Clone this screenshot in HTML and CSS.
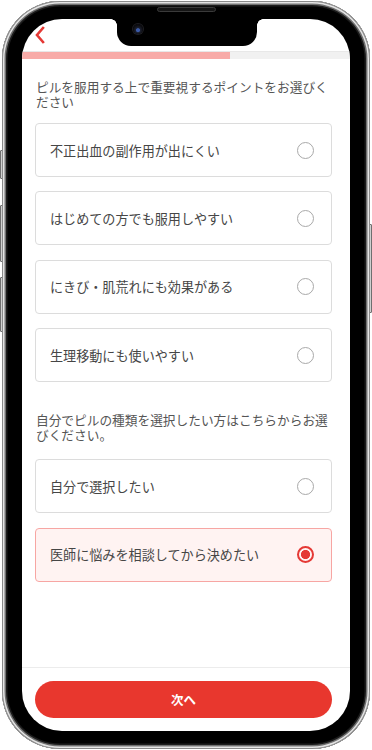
FILE: index.html
```html
<!DOCTYPE html>
<html lang="ja">
<head>
<meta charset="utf-8">
<title>ピル選択</title>
<link rel="stylesheet" href="styles.css">
</head>
<body>
<div class="device">
  <span class="side-btn btn-mute"></span>
  <span class="side-btn btn-vol-up"></span>
  <span class="side-btn btn-vol-down"></span>
  <span class="side-btn btn-power"></span>
  <div class="phone">
    <span class="speaker"></span>
    <div class="screen">
      <div class="notch"><span class="camera"></span></div>
      <header class="topbar">
        <svg class="back" width="12" height="18" viewBox="0 0 12 18"><polyline points="9,2 3,9 9,16" fill="none" stroke="#e53935" stroke-width="2.6" stroke-linecap="square"/></svg>
      </header>
      <div class="progress"><div class="progress-fill" style="width:63.4%"></div></div>
      <main class="content">
        <p class="question">ピルを服用する上で重要視するポイントをお選びください</p>
        <ul class="options">
          <li class="option"><span class="label">不正出血の副作用が出にくい</span><span class="radio"></span></li>
          <li class="option"><span class="label">はじめての方でも服用しやすい</span><span class="radio"></span></li>
          <li class="option"><span class="label">にきび・肌荒れにも効果がある</span><span class="radio"></span></li>
          <li class="option"><span class="label">生理移動にも使いやすい</span><span class="radio"></span></li>
        </ul>
        <p class="question q2">自分でピルの種類を選択したい方はこちらからお選びください。</p>
        <ul class="options options2">
          <li class="option"><span class="label">自分で選択したい</span><span class="radio"></span></li>
          <li class="option selected"><span class="label">医師に悩みを相談してから決めたい</span><span class="radio"></span></li>
        </ul>
      </main>
      <footer class="footer">
        <button class="next">次へ</button>
      </footer>
    </div>
  </div>
</div>
</body>
</html>
```

FILE: styles.css
```css
* { box-sizing: border-box; }
html, body { margin: 0; padding: 0; background: #fff; }
body { font-family: "Noto Sans CJK JP", "Noto Sans", sans-serif; }

.device {
  position: relative;
  width: 372px;
  height: 750px;
  padding: 1px 2px;
}

.side-btn {
  position: absolute;
  width: 4px;
  background: #cfcfcf;
  border: 1px solid #6f6f6f;
  border-radius: 1px;
}
.btn-mute { left: 0; top: 150px; height: 29px; }
.btn-vol-up { left: 0; top: 205px; height: 57px; }
.btn-vol-down { left: 0; top: 277px; height: 55px; }
.btn-power { left: 368px; top: 224px; height: 89px; }

.phone {
  position: relative;
  width: 368px;
  height: 748px;
  padding: 18px 20px;
  background: #000;
  border-radius: 58px;
  box-shadow:
    inset 0 0 0 1px #8a8a8a,
    inset 0 0 0 2.5px #e4e4e4,
    inset 0 0 0 4px #707070,
    inset 0 0 0 5.5px #1c1c1c;
}

.speaker {
  position: absolute;
  left: 155px;
  top: 6px;
  width: 59px;
  height: 5px;
  border-radius: 3px;
  background: #151515;
  border: 1px solid #3a3a3a;
}

.screen {
  position: relative;
  width: 328px;
  height: 712px;
  background: #fff;
  border-radius: 40px;
  overflow: hidden;
  display: flex;
  flex-direction: column;
}

.notch {
  position: absolute;
  left: 95px;
  top: 0;
  width: 140px;
  height: 27px;
  background: #000;
  border-radius: 0 0 14px 14px;
}
.notch::before, .notch::after {
  content: "";
  position: absolute;
  top: 0;
  width: 6px;
  height: 6px;
  background: radial-gradient(circle at 0 100%, transparent 5.5px, #000 6px);
}
.notch::before { left: -6px; background: radial-gradient(circle at 0 100%, transparent 5.5px, #000 6px); }
.notch::after { right: -6px; background: radial-gradient(circle at 100% 100%, transparent 5.5px, #000 6px); }

.camera {
  position: absolute;
  left: 16px;
  top: 5px;
  width: 10px;
  height: 10px;
  border-radius: 50%;
  background: radial-gradient(circle at 50% 62%, #3b5aa8 0 1.6px, #1b1f2e 2.4px, #0c0c10 5px);
  box-shadow: 0 0 0 1px #1e1e22;
}

.topbar {
  height: 33px;
  flex: none;
  display: flex;
  align-items: center;
  padding-left: 12px;
  border-bottom: 1px solid #e8e8e8;
}
.back { display: block; }

.progress {
  height: 7px;
  flex: none;
  background: #f1f1f1;
}
.progress-fill {
  height: 100%;
  background: #f8aba8;
}

.content {
  padding: 20px 18px 0 13px;
}

.question {
  margin: 0;
  padding-left: 1px;
  font-size: 12.7px;
  line-height: 15px;
  color: #555;
}
.q2 { margin-top: 30px; }

.options {
  list-style: none;
  margin: 14px 0 0;
  padding: 0;
  display: flex;
  flex-direction: column;
  gap: 14.4px;
}
.options2 { margin-top: 17px; }

.option {
  height: 54px;
  display: flex;
  align-items: center;
  justify-content: space-between;
  padding: 0 17px 0 14px;
  border: 1px solid #dcdcdc;
  border-radius: 4px;
  background: #fff;
}
.label {
  font-size: 13.1px;
  color: #464646;
}
.radio {
  width: 17px;
  height: 17px;
  border-radius: 50%;
  border: 1.6px solid #a9a9a9;
  flex: none;
}
.option.selected {
  background: #fff3f2;
  border-color: #f7a6a3;
}
.option.selected .radio {
  border: 2px solid #e53935;
  background: radial-gradient(circle, #e53935 0 4.3px, transparent 4.8px);
}

.footer {
  margin-top: auto;
  flex: none;
  border-top: 1px solid #ececec;
  padding: 13px 18px 13px 13px;
}
.next {
  display: block;
  width: 100%;
  height: 37px;
  border: 0;
  border-radius: 19px;
  background: #e8372e;
  color: #fff;
  font-family: "Noto Sans CJK JP", sans-serif;
  font-size: 12.5px;
  font-weight: 700;
  padding: 0;
}
```
